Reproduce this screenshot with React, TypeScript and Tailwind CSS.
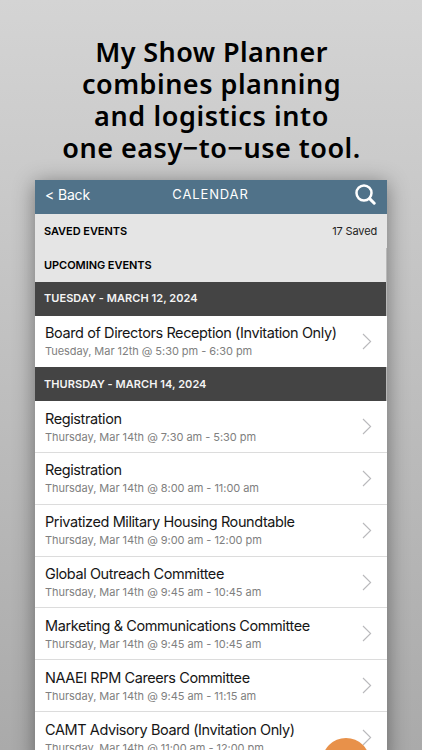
import React from 'react';

interface CalendarEvent {
  title: string;
  time: string;
}

interface EventDay {
  label: string;
  events: CalendarEvent[];
}

const days: EventDay[] = [
  {
    label: 'TUESDAY - MARCH 12, 2024',
    events: [
      {
        title: 'Board of Directors Reception (Invitation Only)',
        time: 'Tuesday, Mar 12th @ 5:30 pm - 6:30 pm',
      },
    ],
  },
  {
    label: 'THURSDAY - MARCH 14, 2024',
    events: [
      { title: 'Registration', time: 'Thursday, Mar 14th @ 7:30 am - 5:30 pm' },
      { title: 'Registration', time: 'Thursday, Mar 14th @ 8:00 am - 11:00 am' },
      { title: 'Privatized Military Housing Roundtable', time: 'Thursday, Mar 14th @ 9:00 am - 12:00 pm' },
      { title: 'Global Outreach Committee', time: 'Thursday, Mar 14th @ 9:45 am - 10:45 am' },
      { title: 'Marketing & Communications Committee', time: 'Thursday, Mar 14th @ 9:45 am - 10:45 am' },
      { title: 'NAAEI RPM Careers Committee', time: 'Thursday, Mar 14th @ 9:45 am - 11:15 am' },
      { title: 'CAMT Advisory Board (Invitation Only)', time: 'Thursday, Mar 14th @ 11:00 am - 12:00 pm' },
    ],
  },
];

const SearchIcon: React.FC = () => (
  <svg width="21" height="21" viewBox="0 0 21 21" fill="none" stroke="white">
    <circle cx="9" cy="9" r="7.5" strokeWidth="2.5" />
    <path d="M14.6 14.6L19.2 19.2" strokeWidth="3" strokeLinecap="round" />
  </svg>
);

const Chevron: React.FC = () => (
  <svg width="10" height="17" viewBox="0 0 10 17" fill="none" stroke="#b9b9bc" strokeWidth="1.1">
    <path d="M1 1L8.6 8.5L1 16" />
  </svg>
);

const Headline: React.FC = () => (
  <h1 className="h-[180px] pt-[36px] pl-px text-center font-['Noto_Sans','Open_Sans',sans-serif] text-[27px] leading-8 font-semibold text-black">
    <span className="block tracking-[0.4px]">My Show Planner</span>
    <span className="block tracking-[0.5px]">combines planning</span>
    <span className="block tracking-[0.6px]">and logistics into</span>
    <span className="block tracking-[0.5px]">one easy−to−use tool.</span>
  </h1>
);

const DayHeader: React.FC<{ label: string }> = ({ label }) => (
  <h2 className="flex h-[34px] items-center border-r border-[#b8b8b8] bg-[#444444] pl-[9px] text-[11px] font-semibold tracking-[0.05px] text-[#f4f4f4]">
    {label}
  </h2>
);

const EventRow: React.FC<{ event: CalendarEvent }> = ({ event }) => (
  <li className="flex h-[51.8px] items-center justify-between border-b border-[#dcdcdc] pr-[15px] pl-[10px] whitespace-nowrap last:border-b-0">
    <div className="pt-px">
      <p className="text-[14.5px] leading-5 tracking-[-0.41px] text-[#161616]">{event.title}</p>
      <p className="text-[11px] leading-[17px] tracking-[-0.04px] text-[#808080]">{event.time}</p>
    </div>
    <Chevron />
  </li>
);

export default function App() {
  return (
    <div className="relative h-[750px] w-[422px] overflow-hidden bg-linear-to-b from-[#d4d4d4] to-[#aaaaaa] font-['Inter',sans-serif]">
      <Headline />
      <main className="ml-[35px] w-[352px] bg-white shadow-[0_3px_20px_rgba(0,0,0,0.42)]">
        <header className="grid h-[33.5px] grid-cols-3 items-center bg-[#507289] pr-[11px] pl-[10px] text-white">
          <button className="pb-1 text-left text-[14px] tracking-[-0.15px]">&lt; Back</button>
          <span className="pb-1 text-center text-[13px] tracking-[0.85px]">CALENDAR</span>
          <button className="justify-self-end pb-1" aria-label="Search">
            <SearchIcon />
          </button>
        </header>
        <div className="flex h-[34.5px] items-center justify-between bg-[#e5e5e5] pr-[10px] pl-[9px] text-[11px]">
          <span className="font-semibold tracking-[-0.05px]">SAVED EVENTS</span>
          <span className="tracking-[-0.15px] text-[#222]">17 Saved</span>
        </div>
        <div className="flex h-[33.5px] items-center border-r border-[#b8b8b8] bg-[#e5e5e5] pl-[9px] text-[11px] font-semibold tracking-[-0.05px]">
          UPCOMING EVENTS
        </div>
        {days.map(day => (
          <section key={day.label}>
            <DayHeader label={day.label} />
            <ul>
              {day.events.map((event, index) => (
                <EventRow key={index} event={event} />
              ))}
            </ul>
          </section>
        ))}
      </main>
      <button
        className="absolute top-[738px] left-[322px] h-12 w-12 rounded-full bg-[#e8914a]"
        aria-label="Add event"
      />
    </div>
  );
}
